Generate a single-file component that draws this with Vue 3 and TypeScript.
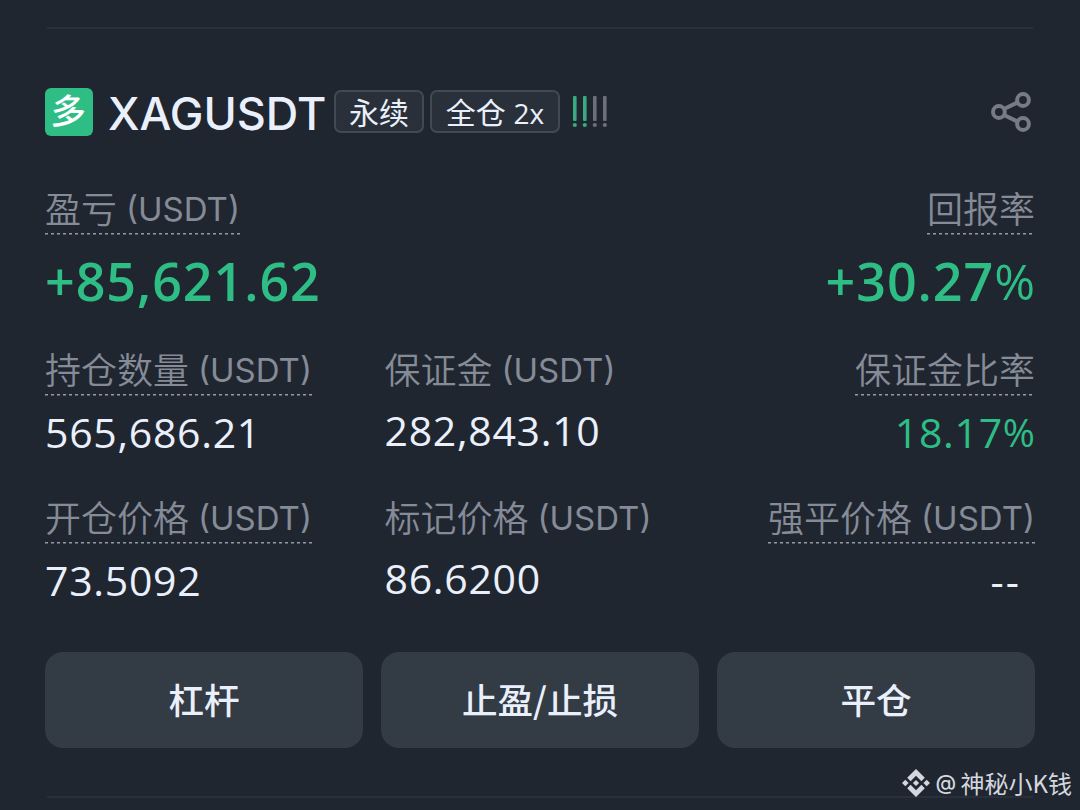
<script setup lang="ts">
interface Metric {
  label: string
  unit?: string
  value: string
  percent?: boolean
  hinted?: boolean
  tone?: 'profit' | 'ratio' | 'empty'
}

const summary: Metric[] = [
  { label: '盈亏', unit: '(USDT)', value: '+85,621.62', hinted: true, tone: 'profit' },
  { label: '回报率', value: '+30.27', percent: true, hinted: true, tone: 'profit' },
]

const details: Metric[][] = [
  [
    { label: '持仓数量', unit: '(USDT)', value: '565,686.21', hinted: true },
    { label: '保证金', unit: '(USDT)', value: '282,843.10' },
    { label: '保证金比率', value: '18.17', percent: true, hinted: true, tone: 'ratio' },
  ],
  [
    { label: '开仓价格', unit: '(USDT)', value: '73.5092', hinted: true },
    { label: '标记价格', unit: '(USDT)', value: '86.6200' },
    { label: '强平价格', unit: '(USDT)', value: '--', hinted: true, tone: 'empty' },
  ],
]

const rows: Metric[][] = [summary, ...details]
const actions: string[] = ['杠杆', '止盈/止损', '平仓']
const riskBars: boolean[] = [true, true, false, false]
</script>

<template>
  <main class="screen">
    <div class="divider"></div>

    <header class="head">
      <span class="side"><span class="glyph">多</span></span>
      <h1 class="symbol">XAGUSDT</h1>
      <span class="tag perp">永续</span>
      <span class="tag cross">全仓 <span class="lev">2x</span></span>
      <svg class="risk" viewBox="0 0 36 32">
        <g v-for="(on, i) in riskBars" :key="i" :fill="on ? '#3aaa80' : '#6b707c'">
          <rect :x="i * 10 + 1" y="0" width="3.6" height="25" rx="1" />
          <circle :cx="i * 10 + 2.8" cy="29" r="2.1" />
        </g>
      </svg>
      <svg class="share" viewBox="0 0 40 40" fill="none" stroke="#767b87" stroke-width="4">
        <circle cx="7.9" cy="20" r="5.9" />
        <circle cx="32" cy="8" r="5.9" />
        <circle cx="32" cy="32" r="5.9" />
        <path d="M13 17 26.6 10.4M13 23 26.6 29.6" />
      </svg>
    </header>

    <section
      v-for="(row, r) in rows"
      :key="r"
      class="row"
      :class="{ summary: r === 0 }"
    >
      <div v-for="m in row" :key="m.label" class="metric" :class="m.tone">
        <div class="label" :class="{ hinted: m.hinted }">
          <span>{{ m.label }}</span><span v-if="m.unit" class="unit">{{ m.unit }}</span>
        </div>
        <div class="value" :class="{ raised: !m.hinted }">
          <span>{{ m.value }}</span><span v-if="m.percent" class="pct">%</span>
        </div>
      </div>
    </section>

    <div class="actions">
      <button v-for="a in actions" :key="a" type="button">{{ a }}</button>
    </div>

    <div class="divider bottom"></div>

    <div class="watermark">
      <svg viewBox="0 0 28 28" fill="#d3d7df">
        <path d="M14 0 22.8 8.8 19.4 12.2 14 6.8 8.6 12.2 5.2 8.8Z" />
        <path d="M14 28 22.8 19.2 19.4 15.8 14 21.2 8.6 15.8 5.2 19.2Z" />
        <path d="M3.3 10.7 6.6 14 3.3 17.3 0 14ZM24.7 10.7 28 14 24.7 17.3 21.4 14ZM14 10.9 17.1 14 14 17.1 10.9 14Z" />
      </svg>
      <span class="at">@</span>
      <span>神秘小K钱</span>
    </div>
  </main>
</template>

<style>
body {
  background: #202630;
}
</style>

<style scoped>
.screen {
  position: relative;
  box-sizing: border-box;
  width: 1080px;
  height: 810px;
  padding: 27px 45px 0;
  overflow: hidden;
  background: #202630;
  color: #eaf0fb;
  font-family: "Open Sans", "Noto Sans CJK SC", sans-serif;
}
.divider {
  height: 2px;
  margin: 0 2px;
  background: #2a303b;
}
.head {
  display: flex;
  align-items: center;
  height: 48px;
  margin-top: 59px;
}
.side {
  width: 48px;
  height: 48px;
  border-radius: 6px;
  background: #2ebd85;
  color: #fff;
  font: 500 35px/42px "Noto Sans CJK SC", sans-serif;
  text-align: center;
}
.glyph {
  display: inline-block;
  transform: skewX(-3deg);
}
.symbol {
  width: 218px;
  margin: 0 0 0 15px;
  padding-top: 3px;
  font: 500 45px/50px Inter, sans-serif;
  white-space: nowrap;
}
.tag {
  box-sizing: border-box;
  height: 43px;
  margin-left: 8px;
  margin-bottom: 1px;
  border: 2px solid #434954;
  border-radius: 7px;
  background: #29303a;
  font: 400 30px/38px "Noto Sans CJK SC", sans-serif;
  text-align: center;
  white-space: nowrap;
}
.perp {
  width: 90px;
}
.cross {
  width: 130px;
  margin-left: 6px;
}
.lev {
  margin-left: 1px;
  font: 400 28px/36px "Open Sans", sans-serif;
}
.risk {
  width: 36px;
  height: 32px;
  margin-left: 12px;
}
.share {
  width: 40px;
  height: 40px;
  margin-left: auto;
  margin-right: 4px;
}
.row {
  display: grid;
  grid-template-columns: 339.5px 340.5px 1fr;
  height: 148px;
}
.row.summary {
  grid-template-columns: 1fr 1fr;
  height: 161px;
  margin-top: 50px;
}
.metric:last-child {
  display: flex;
  flex-direction: column;
  align-items: flex-end;
}
.label {
  display: flex;
  width: max-content;
  height: 48.5px;
  color: #858b97;
  font: 350 36px/42px "Noto Sans CJK SC", sans-serif;
}
.hinted {
  background: repeating-linear-gradient(90deg, #959ba6 0 3px, transparent 3px 6px) 0 100% / 100% 1.5px no-repeat;
}
.unit {
  margin-left: 9px;
  font: 400 33px/46px Inter, sans-serif;
}
.value {
  display: flex;
  height: 60px;
  margin-top: 6.5px;
  font-size: 41px;
  line-height: 60px;
  letter-spacing: 0.7px;
}
.raised {
  margin-top: 4.5px;
}
.profit .value {
  margin-top: 16.5px;
  color: #2ebd85;
  font-size: 52px;
  font-weight: 600;
  letter-spacing: 0.95px;
}
.ratio .value {
  color: #2ebd85;
}
.value .pct {
  font-size: 0.95em;
  font-weight: 400;
  letter-spacing: 0;
}
.empty .value {
  margin-right: 14px;
  letter-spacing: 2px;
}
.actions {
  display: grid;
  grid-template-columns: repeat(3, 318px);
  gap: 18px;
  margin-top: 9px;
}
.actions button {
  height: 96px;
  padding: 0 0 2px;
  border: 0;
  border-radius: 18px;
  background: #333b45;
  color: #eaf0fb;
  font: 500 35.6px/50px "Noto Sans CJK SC", sans-serif;
}
.bottom {
  margin-top: 48px;
}
.watermark {
  position: absolute;
  right: 8px;
  bottom: 10px;
  display: flex;
  align-items: center;
  height: 34px;
  color: #d3d7df;
  font: 400 24px/34px "Noto Sans CJK SC", sans-serif;
}
.watermark svg {
  width: 28px;
  height: 28px;
}
.at {
  width: 20px;
  margin: 0 5px 0 5px;
  font: 500 21px/30px Inter, sans-serif;
}
</style>
